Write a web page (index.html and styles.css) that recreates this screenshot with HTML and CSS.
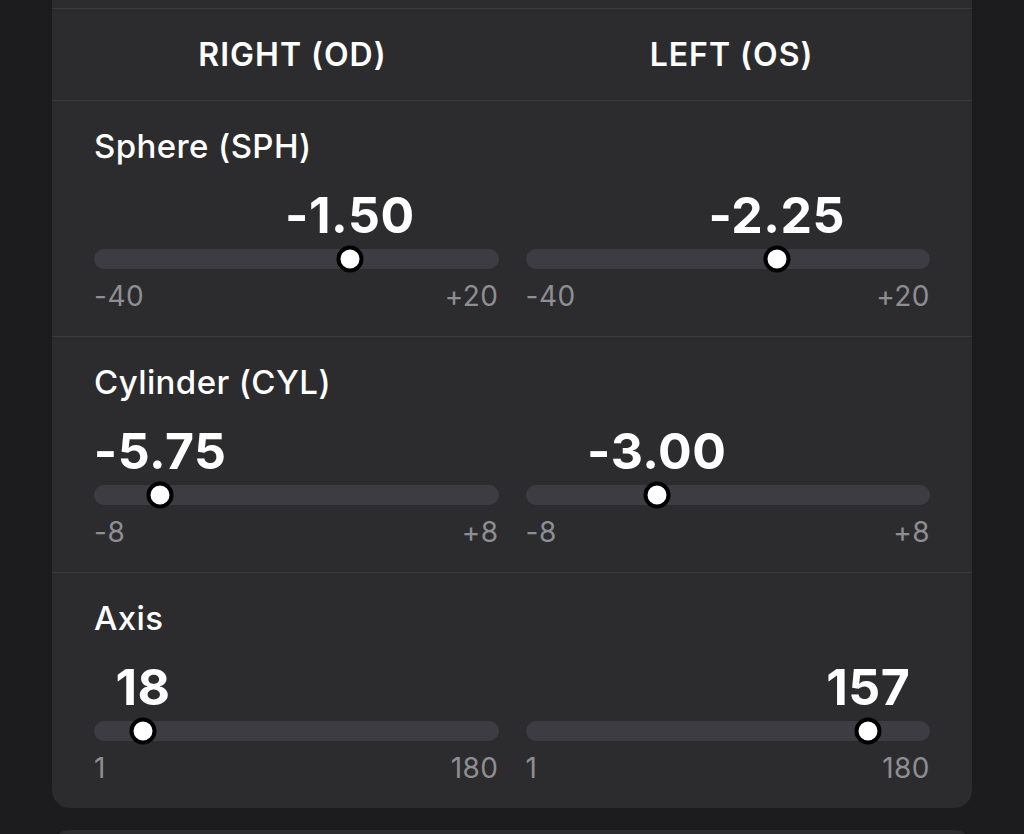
FILE: index.html
```html
<!DOCTYPE html>
<html lang="en">
<head>
<meta charset="utf-8">
<title>Prescription</title>
<link rel="stylesheet" href="styles.css">
</head>
<body>
<div class="page">
  <div class="card">
    <div class="prev-row"></div>
    <div class="eye-header">
      <div class="eye">RIGHT (OD)</div>
      <div class="eye">LEFT (OS)</div>
    </div>

    <section class="param">
      <h2 class="param-label">Sphere (SPH)</h2>
      <div class="sliders">
        <div class="slider">
          <div class="value-row"><span class="value" style="--p:0.6417">-1.50</span></div>
          <div class="track"><span class="thumb" style="--p:0.6417"></span></div>
          <div class="range"><span>-40</span><span>+20</span></div>
        </div>
        <div class="slider">
          <div class="value-row"><span class="value" style="--p:0.6292">-2.25</span></div>
          <div class="track"><span class="thumb" style="--p:0.6292"></span></div>
          <div class="range"><span>-40</span><span>+20</span></div>
        </div>
      </div>
    </section>

    <section class="param">
      <h2 class="param-label">Cylinder (CYL)</h2>
      <div class="sliders">
        <div class="slider">
          <div class="value-row"><span class="value" style="--p:0.1406">-5.75</span></div>
          <div class="track"><span class="thumb" style="--p:0.1406"></span></div>
          <div class="range"><span>-8</span><span>+8</span></div>
        </div>
        <div class="slider">
          <div class="value-row"><span class="value" style="--p:0.3125">-3.00</span></div>
          <div class="track"><span class="thumb" style="--p:0.3125"></span></div>
          <div class="range"><span>-8</span><span>+8</span></div>
        </div>
      </div>
    </section>

    <section class="param">
      <h2 class="param-label">Axis</h2>
      <div class="sliders">
        <div class="slider">
          <div class="value-row"><span class="value" style="--p:0.0950">18</span></div>
          <div class="track"><span class="thumb" style="--p:0.0950"></span></div>
          <div class="range"><span>1</span><span>180</span></div>
        </div>
        <div class="slider">
          <div class="value-row"><span class="value" style="--p:0.8715">157</span></div>
          <div class="track"><span class="thumb" style="--p:0.8715"></span></div>
          <div class="range"><span>1</span><span>180</span></div>
        </div>
      </div>
    </section>
  </div>
  <div class="next-card"></div>
</div>
</body>
</html>
```

FILE: styles.css
```css
* { box-sizing: border-box; }

html, body {
  margin: 0;
  padding: 0;
  background: #1c1c1e;
  font-family: Inter, "Noto Sans", "DejaVu Sans", sans-serif;
  color: #ffffff;
}

.page {
  padding: 0 52px;
  height: 834px;
  overflow: hidden;
}

.card {
  background: #2c2c2e;
  border-radius: 0 0 18px 18px;
}

.prev-row {
  height: 9px;
  border-bottom: 1px solid #3a3a3c;
}

.eye-header {
  display: grid;
  grid-template-columns: 1fr 1fr;
  column-gap: 42px;
  padding: 29px 42px 28px;
  border-bottom: 1px solid #3a3a3c;
}

.eye {
  text-align: center;
  font-size: 32px;
  line-height: 34px;
  font-weight: 600;
  letter-spacing: 1px;
}

.param {
  padding: 27px 42px 25px;
  border-bottom: 1px solid #3a3a3c;
}

.param:last-child {
  border-bottom: none;
}

.param-label {
  margin: 0;
  font-size: 33px;
  line-height: 36px;
  font-weight: 500;
  letter-spacing: 0.4px;
}

.sliders {
  display: grid;
  grid-template-columns: 1fr 1fr;
  column-gap: 27px;
  margin-top: 27px;
}

.value-row {
  position: relative;
  height: 48px;
}

.value {
  position: absolute;
  top: 0;
  left: calc(13px + var(--p) * (100% - 26px));
  transform: translateX(-50%);
  font-size: 50px;
  line-height: 48px;
  font-weight: 700;
  letter-spacing: 0.5px;
  white-space: nowrap;
}

.track {
  position: relative;
  margin-top: 10px;
  height: 20px;
  border-radius: 10px;
  background: #3c3c42;
}

.thumb {
  position: absolute;
  top: 50%;
  left: calc(13px + var(--p) * (100% - 26px));
  width: 27px;
  height: 27px;
  transform: translate(-50%, -50%);
  border-radius: 50%;
  background: #ffffff;
  border: 4px solid #000000;
}

.range {
  display: flex;
  justify-content: space-between;
  margin-top: 12px;
  font-size: 28px;
  line-height: 30px;
  font-weight: 400;
  letter-spacing: 0.5px;
  color: #8e8e93;
}

.next-card {
  margin-top: 22px;
  height: 40px;
  background: #2c2c2e;
  border-radius: 18px 18px 0 0;
}
```
